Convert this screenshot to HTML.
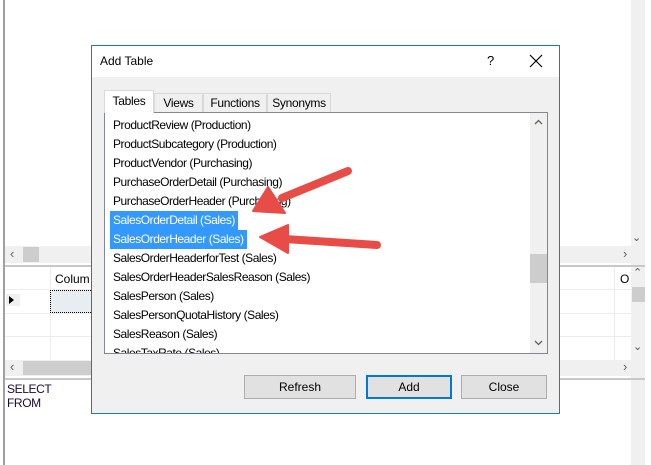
<!DOCTYPE html>
<html><head><style>
*{margin:0;padding:0;box-sizing:border-box}
body{width:651px;height:465px;background:#fff;position:relative;overflow:hidden;font-family:"Liberation Sans",sans-serif;font-size:12px;color:#000}
.a{position:absolute}
.row{position:absolute;left:6px;height:19px;line-height:19px;white-space:nowrap;padding-left:2px;padding-right:3px;letter-spacing:-0.45px}
.sel{background:#3399ff;color:#fff}
.btn{position:absolute;top:375px;height:24px;border:1px solid #adadad;background:#e1e1e1;text-align:center;line-height:22px}
.tab{position:absolute;top:47px;height:19px;border:1px solid #d9d9d9;border-bottom:none;background:#f0f0f0;line-height:18px;text-align:center;letter-spacing:-0.3px}
</style></head><body>
<div class="a" style="left:3px;top:0;width:2px;height:465px;background:#a0a0a0"></div>
<div class="a" style="left:631px;top:0;width:20px;height:465px;background:#f0f0f0"></div>
<div class="a" style="left:645px;top:0;width:6px;height:465px;background:#fff"></div>
<div class="a" style="left:632px;top:231px;font-size:11px;color:#555">&#8964;</div>
<div class="a" style="left:5px;top:246px;width:626px;height:17px;background:#f0f0f0"></div>
<div class="a" style="left:23px;top:247px;width:16px;height:15px;background:#cdcdcd"></div>
<div class="a" style="left:10px;top:246px;color:#606060;font-size:13px">&lsaquo;</div>
<div class="a" style="left:623px;top:246px;color:#606060;font-size:13px">&rsaquo;</div>
<div class="a" style="left:5px;top:265px;width:640px;height:2px;background:#c8c8c8"></div>
<div class="a" style="left:5px;top:267px;width:640px;height:93px;background:#fff"></div>
<div class="a" style="left:5px;top:289px;width:626px;height:1px;background:#ececec"></div>
<div class="a" style="left:5px;top:313px;width:626px;height:1px;background:#ececec"></div>
<div class="a" style="left:5px;top:336px;width:626px;height:1px;background:#ececec"></div>
<div class="a" style="left:50px;top:267px;width:1px;height:93px;background:#ececec"></div>
<div class="a" style="left:614px;top:267px;width:1px;height:93px;background:#ececec"></div>
<div class="a" style="left:55px;top:272px;">Colum</div>
<div class="a" style="left:620px;top:272px;">O</div>
<div class="a" style="left:50px;top:290px;width:45px;height:23px;background:#e8edf1;border:1px dotted #000"></div>
<div class="a" style="left:6px;top:294px;width:14px;height:12px;background:#f0f0f0"></div>
<div class="a" style="left:9px;top:296px;width:0;height:0;border-left:5px solid #000;border-top:4px solid transparent;border-bottom:4px solid transparent"></div>
<div class="a" style="left:631px;top:267px;width:14px;height:93px;background:#f0f0f0"></div>
<div class="a" style="left:632px;top:287px;width:13px;height:15px;background:#cdcdcd"></div>
<div class="a" style="left:633px;top:266px;font-size:11px;color:#555">&#8963;</div>
<div class="a" style="left:633px;top:340px;font-size:11px;color:#555">&#8964;</div>
<div class="a" style="left:5px;top:360px;width:626px;height:16px;background:#f0f0f0"></div>
<div class="a" style="left:23px;top:361px;width:210px;height:14px;background:#cdcdcd"></div>
<div class="a" style="left:10px;top:359px;color:#606060;font-size:13px">&lsaquo;</div>
<div class="a" style="left:623px;top:359px;color:#606060;font-size:13px">&rsaquo;</div>
<div class="a" style="left:5px;top:378px;width:640px;height:2px;background:#c8c8c8"></div>
<div class="a" style="left:7px;top:382px;line-height:14px;color:#1a0a3a;letter-spacing:-0.4px">SELECT<br>FROM</div>

<div class="a" style="left:91px;top:45px;width:469px;height:369px;background:#f0f0f0;border:1px solid #1979ca">
  <div class="a" style="left:0;top:0;width:467px;height:31px;background:#fff"></div>
  <div class="a" style="left:8px;top:8px;font-size:12px">Add Table</div>
  <div class="a" style="left:395px;top:7px;font-size:13px">?</div>
  <svg class="a" style="left:437px;top:8px" width="14" height="14"><path d="M1 1L13 13M13 1L1 13" stroke="#000" stroke-width="1.2"/></svg>
  <div class="tab" style="left:61px;width:64px;left:175px">Synonyms</div>
  <div class="tab" style="left:111px;width:64px">Functions</div>
  <div class="tab" style="left:62px;width:49px">Views</div>
  <div class="tab" style="left:12px;width:50px;top:44px;height:23px;background:#fff;line-height:20px;z-index:2">Tables</div>
  <div class="a" style="left:12px;top:66px;width:444px;height:242px;background:#fff;border:1px solid #828790;overflow:hidden">
    <div class="row" style="top:3px">ProductReview (Production)</div>
    <div class="row" style="top:22px">ProductSubcategory (Production)</div>
    <div class="row" style="top:41px">ProductVendor (Purchasing)</div>
    <div class="row" style="top:60px">PurchaseOrderDetail (Purchasing)</div>
    <div class="row" style="top:79px">PurchaseOrderHeader (Purchasing)</div>
    <div class="row sel" style="top:98px;left:5px;padding-left:3px">SalesOrderDetail (Sales)</div>
    <div class="row sel" style="top:117px;left:5px;padding-left:3px">SalesOrderHeader (Sales)</div>
    <div class="row" style="top:136px">SalesOrderHeaderforTest (Sales)</div>
    <div class="row" style="top:155px">SalesOrderHeaderSalesReason (Sales)</div>
    <div class="row" style="top:174px">SalesPerson (Sales)</div>
    <div class="row" style="top:193px">SalesPersonQuotaHistory (Sales)</div>
    <div class="row" style="top:212px">SalesReason (Sales)</div>
    <div class="row" style="top:231px">SalesTaxRate (Sales)</div>
    <div class="a" style="left:425px;top:0;width:17px;height:240px;background:#f0f0f0"></div>
    <div class="a" style="left:425px;top:141px;width:17px;height:29px;background:#cdcdcd"></div>
    <svg class="a" style="left:429px;top:6px" width="9" height="6"><path d="M1 5L4.5 1.5L8 5" stroke="#606060" stroke-width="1.3" fill="none"/></svg>
    <svg class="a" style="left:429px;top:227px" width="9" height="6"><path d="M1 1L4.5 4.5L8 1" stroke="#606060" stroke-width="1.3" fill="none"/></svg>
  </div>
  <div class="btn" style="left:152px;top:329px;width:112px">Refresh</div>
  <div class="btn" style="left:274px;top:329px;width:86px;border:2px solid #0078d7;line-height:20px">Add</div>
  <div class="btn" style="left:369px;top:329px;width:86px">Close</div>
</div>
<svg class="a" style="left:0;top:0" width="651" height="465">
  <g fill="#e84c47" stroke="#e84c47" stroke-linejoin="round">
    <path d="M348 171 L282 198" stroke-width="8" stroke-linecap="round" fill="none"/>
    <path d="M253 211 L268 187 L285 213 Z" stroke-width="2"/>
    <path d="M377 245 L285 239" stroke-width="8" stroke-linecap="round" fill="none"/>
    <path d="M260 237 L288 225 L288 253 Z" stroke-width="2"/>
  </g>
</svg>
</body></html>
